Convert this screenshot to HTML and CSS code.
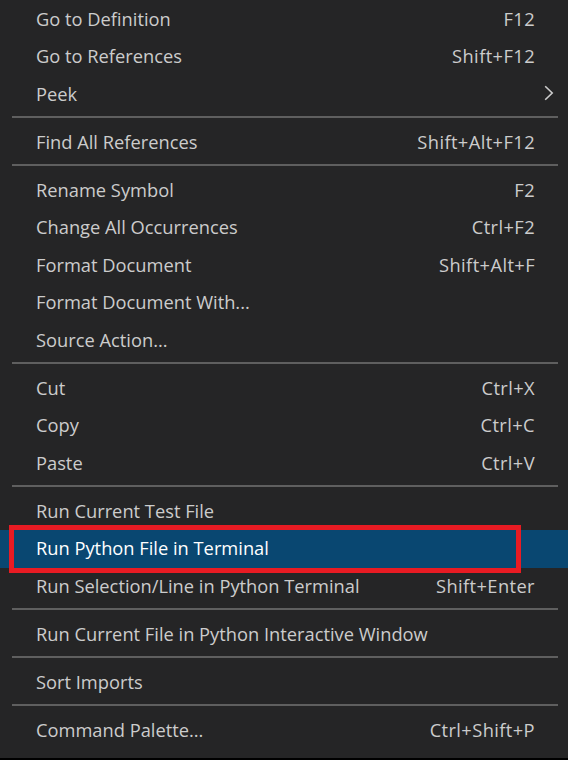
FILE: index.html
```html
<!DOCTYPE html>
<html>
<head>
<meta charset="utf-8">
<link rel="stylesheet" href="styles.css">
</head>
<body>
<div class="menu">
  <div class="row"><span class="label">Go to Definition</span><span class="key">F12</span></div>
  <div class="row"><span class="label">Go to References</span><span class="key">Shift+F12</span></div>
  <div class="row"><span class="label">Peek</span><span class="key"></span><span class="sub"><svg width="10" height="16" viewBox="0 0 10 16"><polyline points="1.2,1.2 8.2,8 1.2,14.8" fill="none" stroke="#cccccc" stroke-width="1.6"/></svg></span></div>
  <div class="sep"></div>
  <div class="row"><span class="label">Find All References</span><span class="key">Shift+Alt+F12</span></div>
  <div class="sep"></div>
  <div class="row"><span class="label">Rename Symbol</span><span class="key">F2</span></div>
  <div class="row"><span class="label">Change All Occurrences</span><span class="key">Ctrl+F2</span></div>
  <div class="row"><span class="label">Format Document</span><span class="key">Shift+Alt+F</span></div>
  <div class="row"><span class="label">Format Document With...</span><span class="key"></span></div>
  <div class="row"><span class="label">Source Action...</span><span class="key"></span></div>
  <div class="sep"></div>
  <div class="row"><span class="label">Cut</span><span class="key">Ctrl+X</span></div>
  <div class="row"><span class="label">Copy</span><span class="key">Ctrl+C</span></div>
  <div class="row"><span class="label">Paste</span><span class="key">Ctrl+V</span></div>
  <div class="sep"></div>
  <div class="row"><span class="label">Run Current Test File</span><span class="key"></span></div>
  <div class="row active"><span class="label">Run Python File in Terminal</span><span class="key"></span><span class="mark"></span></div>
  <div class="row"><span class="label">Run Selection/Line in Python Terminal</span><span class="key">Shift+Enter</span></div>
  <div class="sep"></div>
  <div class="row"><span class="label">Run Current File in Python Interactive Window</span><span class="key"></span></div>
  <div class="sep"></div>
  <div class="row"><span class="label">Sort Imports</span><span class="key"></span></div>
  <div class="sep"></div>
  <div class="row"><span class="label">Command Palette...</span><span class="key">Ctrl+Shift+P</span></div>
</div>
</body>
</html>
```
FILE: styles.css
```css
html, body {
  margin: 0;
  padding: 0;
  background: #000000;
}
body {
  width: 568px;
  height: 760px;
  overflow: hidden;
}
.menu {
  box-sizing: border-box;
  height: 758px;
  background: #252526;
  padding-top: 0.5px;
  font-family: "Open Sans", "Noto Sans", sans-serif;
  font-size: 18.3px;
  color: #cccccc;
}
.row {
  position: relative;
  box-sizing: border-box;
  display: grid;
  grid-template-columns: 1fr auto 33px;
  align-items: center;
  height: 37.5px;
  padding-left: 36px;
  padding-bottom: 2px;
  white-space: nowrap;
}
.key {
  text-align: right;
  letter-spacing: 0.4px;
}
.sub {
  display: flex;
  align-items: center;
  padding-left: 9px;
}
.sep {
  height: 2px;
  margin: 3px 10px 5.5px 12px;
  background: #5f5f5f;
}
.active {
  background: #094771;
  color: #ffffff;
}
.mark {
  position: absolute;
  left: 9px;
  top: -5px;
  width: 512px;
  height: 48px;
  box-sizing: border-box;
  border: 5px solid #e81b23;
}
```
